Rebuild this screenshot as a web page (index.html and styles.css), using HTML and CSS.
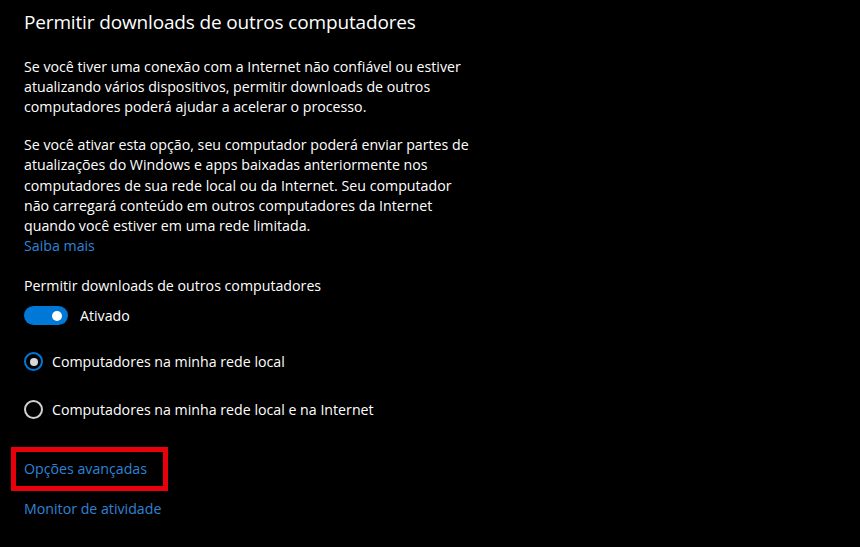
FILE: index.html
```html
<!DOCTYPE html>
<html lang="pt">
<head>
<meta charset="utf-8">
<link rel="stylesheet" href="styles.css">
</head>
<body>
<main class="page">
  <h1 class="title">Permitir downloads de outros computadores</h1>
  <p class="text">Se você tiver uma conexão com a Internet não confiável ou estiver<br>atualizando vários dispositivos, permitir downloads de outros<br>computadores poderá ajudar a acelerar o processo.</p>
  <p class="text para2">Se você ativar esta opção, seu computador poderá enviar partes de<br>atualizações do Windows e apps baixadas anteriormente nos<br>computadores de sua rede local ou da Internet. Seu computador<br>não carregará conteúdo em outros computadores da Internet<br>quando você estiver em uma rede limitada.<br><a class="link" href="#">Saiba mais</a></p>
  <div class="label">Permitir downloads de outros computadores</div>
  <div class="toggle-row">
    <span class="toggle"><span class="knob"></span></span>
    <span class="toggle-text">Ativado</span>
  </div>
  <div class="radio-row first">
    <span class="radio checked"><span class="dot"></span></span>
    <span class="radio-text">Computadores na minha rede local</span>
  </div>
  <div class="radio-row">
    <span class="radio"></span>
    <span class="radio-text">Computadores na minha rede local e na Internet</span>
  </div>
  <div class="highlight"><a class="link" href="#">Opções avançadas</a></div>
  <a class="link monitor" href="#">Monitor de atividade</a>
</main>
</body>
</html>
```
FILE: styles.css
```css
html, body {
  margin: 0;
  padding: 0;
  background: #000;
}
body {
  width: 860px;
  height: 547px;
  overflow: hidden;
  font-family: "Open Sans", "Noto Sans", sans-serif;
  color: #fff;
}
.page {
  padding: 8px 0 0 24px;
  display: flex;
  flex-direction: column;
  align-items: flex-start;
  font-size: 14.2px;
}
.title {
  margin: 0;
  font-size: 19px;
  font-weight: 400;
  line-height: 28px;
  letter-spacing: -0.15px;
}
.text {
  margin: 21px 0 0;
  font-size: 14.2px;
  line-height: 19.8px;
}
.para2 {
  margin-top: 19px;
  line-height: 20.1px;
}
.link {
  color: #2e83d6;
  text-decoration: none;
}
.label {
  margin-top: 20px;
  line-height: 20px;
}
.toggle-row {
  margin-top: 10px;
  display: flex;
  align-items: center;
  height: 20px;
}
.toggle {
  width: 44px;
  height: 19px;
  border-radius: 10px;
  background: #0078d7;
  display: flex;
  align-items: center;
  justify-content: flex-end;
  padding-right: 6px;
  box-sizing: border-box;
}
.knob {
  width: 10px;
  height: 10px;
  border-radius: 50%;
  background: #fff;
}
.toggle-text {
  margin-left: 12px;
}
.radio-row {
  display: flex;
  align-items: center;
  height: 20px;
  margin-top: 28px;
}
.radio-row.first {
  margin-top: 26px;
}
.radio {
  width: 19px;
  height: 19px;
  box-sizing: border-box;
  border-radius: 50%;
  border: 2px solid #d0d0d0;
  display: flex;
  align-items: center;
  justify-content: center;
}
.radio.checked {
  border-color: #0078d7;
}
.dot {
  width: 8px;
  height: 8px;
  border-radius: 50%;
  background: #d8d8d8;
}
.radio-text {
  margin-left: 9px;
}
.highlight {
  margin: 27px 0 0 -13px;
  border: 5px solid #e8000b;
  width: 157px;
  height: 44px;
  box-sizing: border-box;
  padding: 0 0 0 8px;
  display: flex;
  align-items: center;
}
.monitor {
  margin-top: 8px;
  line-height: 20px;
}
```
